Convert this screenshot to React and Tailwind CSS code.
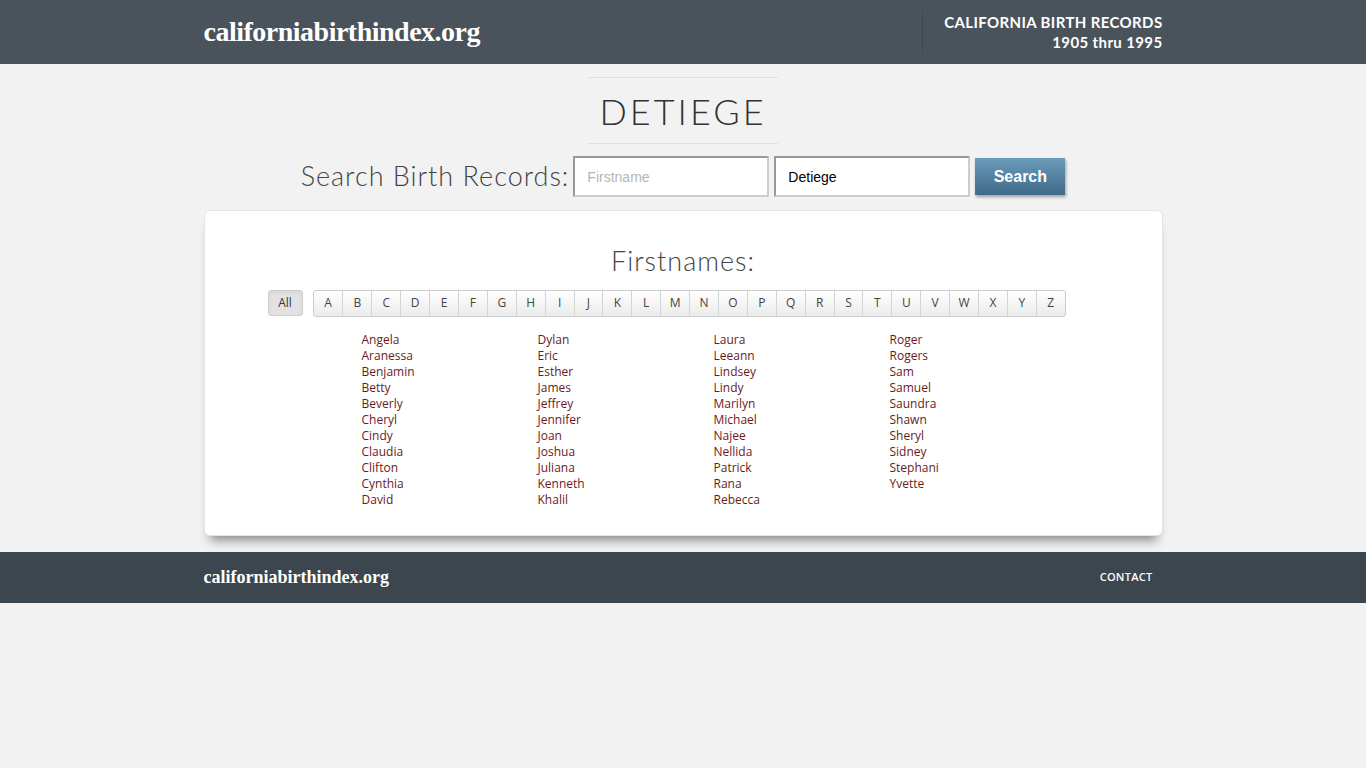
import React from "react";

const cols = [
  ["Angela","Aranessa","Benjamin","Betty","Beverly","Cheryl","Cindy","Claudia","Clifton","Cynthia","David"],
  ["Dylan","Eric","Esther","James","Jeffrey","Jennifer","Joan","Joshua","Juliana","Kenneth","Khalil"],
  ["Laura","Leeann","Lindsey","Lindy","Marilyn","Michael","Najee","Nellida","Patrick","Rana","Rebecca"],
  ["Roger","Rogers","Sam","Samuel","Saundra","Shawn","Sheryl","Sidney","Stephani","Yvette"],
];
const letters = "ABCDEFGHIJKLMNOPQRSTUVWXYZ".split("");

export default function App() {
  return (
    <div className="min-h-[768px] bg-[#f2f2f2]" style={{ fontFamily: "'Open Sans', sans-serif" }}>
      <header className="h-[64px] bg-[#4a535b]">
        <div className="mx-auto flex h-full w-[959px] items-center justify-between">
          <div className="text-[28px] font-bold text-white" style={{ fontFamily: "'Liberation Serif', serif", letterSpacing: "-0.5px" }}>californiabirthindex.org</div>
          <div className="flex h-full items-center">
            <div className="mr-[21px] h-[40px] w-px bg-[#3f474e]"></div>
            <div className="text-right text-[15px] font-bold leading-[20px] tracking-wide text-white" style={{ fontFamily: "Lato, sans-serif" }}>
              <div>CALIFORNIA BIRTH RECORDS</div>
              <div>1905 thru 1995</div>
            </div>
          </div>
        </div>
      </header>
      <div className="mx-auto flex w-[959px] flex-col items-center">
        <div className="mt-[13px] flex h-[67px] w-[190px] items-center justify-center border-y border-[#e0e0e0] text-[36px] font-light tracking-[3px] text-[#333]" style={{ fontFamily: "Lato, sans-serif" }}>DETIEGE</div>
        <div className="mt-[12px] flex items-center">
          <span className="mr-[4px] text-[27px] font-light tracking-[1px] text-[#444]" style={{ fontFamily: "Lato, sans-serif" }}>Search Birth Records:</span>
          <input className="h-[41px] w-[196px] border-2 border-[#ccc] border-t-[#999] border-l-[#999] bg-white px-[12px] text-[14px] text-[#666] outline-none" placeholder="Firstname" style={{ fontFamily: "'Liberation Sans', sans-serif" }} />
          <input className="ml-[5px] h-[41px] w-[196px] border-2 border-[#ccc] border-t-[#999] border-l-[#999] bg-white px-[12px] text-[14px] text-black outline-none" defaultValue="Detiege" style={{ fontFamily: "'Liberation Sans', sans-serif" }} />
          <button className="ml-[5px] h-[37px] w-[90px] bg-gradient-to-b from-[#6c9bbb] to-[#3f6b8a] text-[16px] font-bold text-white shadow-[1px_2px_3px_rgba(0,0,0,0.35)]" style={{ fontFamily: "'Liberation Sans', sans-serif" }}>Search</button>
        </div>
        <div className="mt-[13px] h-[326px] w-full rounded-[6px] border border-[#e4e4e4] bg-white shadow-[0_10px_10px_-6px_rgba(0,0,0,0.45)]">
          <div className="mt-[30px] text-center text-[27px] font-light tracking-[1px] text-[#444]" style={{ fontFamily: "Lato, sans-serif" }}>Firstnames:</div>
          <div className="ml-[63px] mt-[8px] flex" style={{ fontFamily: "'Open Sans', sans-serif" }}>
            <div className="flex h-[26px] w-[35px] items-center justify-center rounded-[3px] border border-[#ccc] bg-[#e2e2e2] text-[12px] text-[#333] shadow-inner">All</div>
            <div className="ml-[10px] flex h-[27px] overflow-hidden rounded-[3px] border border-[#ccc] bg-gradient-to-b from-white to-[#ebebeb]">
              {letters.map((l, i) => (
                <div key={l} className={`flex w-[28.9px] items-center justify-center text-[12px] text-[#444] ${i > 0 ? "border-l border-[#d4d4d4]" : ""}`}>{l}</div>
              ))}
            </div>
          </div>
          <div className="ml-[157px] mt-[15px] flex text-[12px] leading-[16px] text-[#6b1a1a]" style={{ fontFamily: "'Open Sans', sans-serif" }}>
            {cols.map((c, i) => (
              <div key={i} className="w-[176px]">
                {c.map((n) => <div key={n}>{n}</div>)}
              </div>
            ))}
          </div>
        </div>
      </div>
      <footer className="mt-[16px] h-[51px] bg-[#3b464e]">
        <div className="mx-auto flex h-full w-[959px] items-center justify-between">
          <div className="text-[18px] font-bold text-white" style={{ fontFamily: "'Liberation Serif', serif" }}>californiabirthindex.org</div>
          <div className="mr-[10px] text-[11px] font-semibold tracking-wide text-white">CONTACT</div>
        </div>
      </footer>
    </div>
  );
}
